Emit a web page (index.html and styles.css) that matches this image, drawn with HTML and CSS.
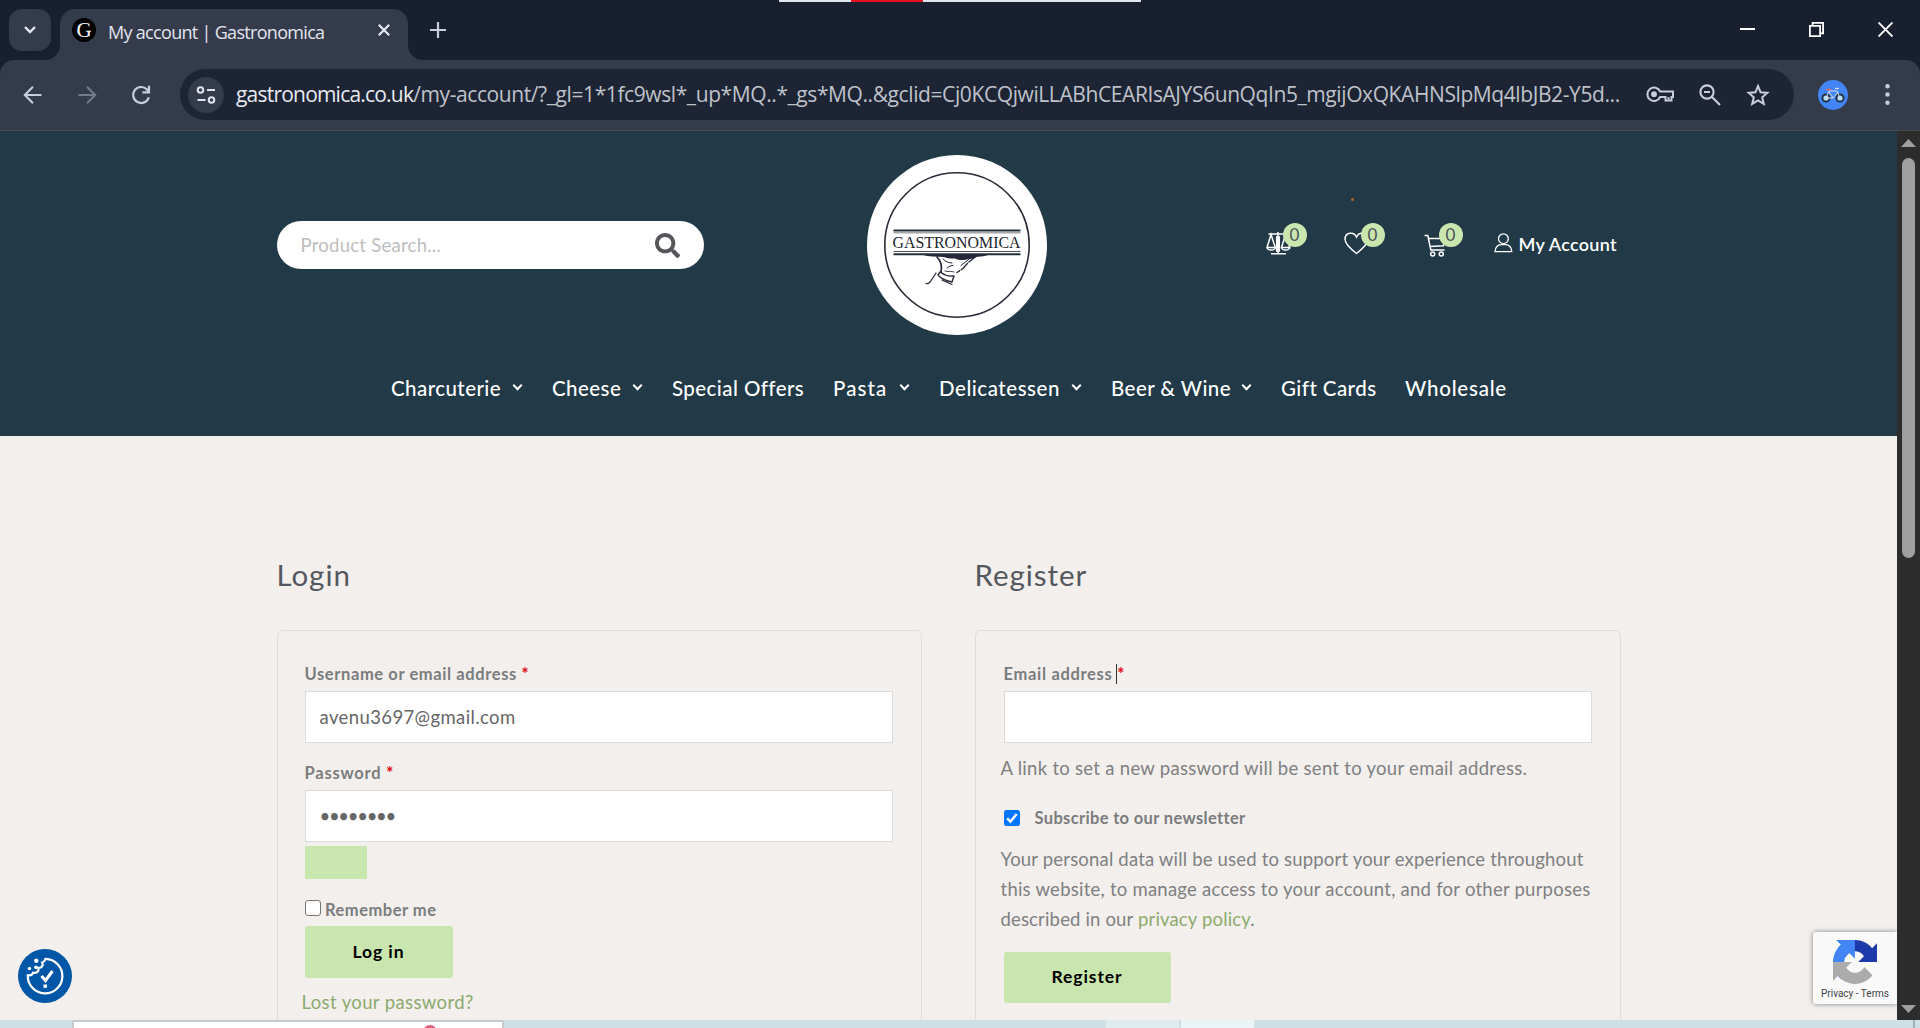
FILE: index.html
```html
<!DOCTYPE html>
<html lang="en">
<head>
<meta charset="utf-8">
<title>My account | Gastronomica</title>
<link rel="stylesheet" href="styles.css">
</head>
<body>
<div class="tabstrip">
  <button class="tab-search"><svg width="14" height="10" viewBox="0 0 14 10" fill="none" stroke="#e6e8f2" stroke-width="2.4"><path d="M2 2l5 5 5-5"/></svg></button>
  <div class="tab">
    <span class="favicon">G</span>
    <span class="tab-title">My account | Gastronomica</span>
    <svg class="tab-close" width="12" height="12" viewBox="0 0 12 12" stroke="#e6e8f2" stroke-width="2.2"><path d="M.8.8l10.4 10.4M11.2.8L.8 11.2"/></svg>
  </div>
  <svg class="tab-new" width="16" height="16" viewBox="0 0 16 16" stroke="#c9cee0" stroke-width="2.2"><path d="M8 0v16M0 8h16"/></svg>
  <div class="share-bar"><span class="share-stop"></span></div>
  <div class="window-controls">
    <svg width="15" height="15" viewBox="0 0 15 15" stroke="#fff" stroke-width="2"><path d="M0 7h15"/></svg>
    <svg width="15" height="15" viewBox="0 0 15 15" fill="none" stroke="#fff" stroke-width="1.8"><path d="M.9 3.9h10.2v10.2H.9zM3.6 3.6V.9h10.5v10.5h-2.7"/></svg>
    <svg width="15" height="15" viewBox="0 0 15 15" stroke="#fff" stroke-width="1.9"><path d="M.5.5l14 14M14.5.5l-14 14"/></svg>
  </div>
</div>
<div class="toolbar">
  <div class="nav-buttons">
    <svg width="20" height="20" viewBox="0 0 20 20" fill="none" stroke="#c6cde0" stroke-width="2.1"><path d="M18.5 10H2.5M10 1.8L1.8 10l8.2 8.2"/></svg>
    <svg width="20" height="20" viewBox="0 0 20 20" fill="none" stroke="#737a8c" stroke-width="2.1"><path d="M1.5 10h16M10 1.8l8.2 8.2-8.2 8.2"/></svg>
    <svg width="20" height="20" viewBox="0 0 20 20" fill="none" stroke="#c6cde0" stroke-width="2.2"><path d="M17.8 12.4A8 8 0 1 1 16 4.5l2 2.4M18 .8v6.5h-6.6"/></svg>
  </div>
  <div class="omnibox">
    <span class="site-info"><svg width="20" height="18" viewBox="0 0 20 18" fill="none" stroke="#dfe3ee" stroke-width="2"><circle cx="4.500" cy="4" r="2.800"/><path d="M11 4h8M1.500 14h8"/><circle cx="15.500" cy="14" r="2.800"/></svg></span>
    <span class="url"><span class="url-host">gastronomica.co.uk</span><span class="url-path">/my-account/?_gl=1*1fc9wsl*_up*MQ..*_gs*MQ..&amp;gclid=Cj0KCQjwiLLABhCEARIsAJYS6unQqIn5_mgijOxQKAHNSlpMq4lbJB2-Y5d...</span></span>
    <div class="omni-icons">
      <svg width="28" height="17" viewBox="0 0 28 17" fill="none" stroke="#c9cddc" stroke-width="2"><path d="M14.200 5.500A6.700 6.700 0 1 0 14.200 11h5.300v3.600h6V11H27V5.500z"/><circle cx="8" cy="8.200" r="2.900" fill="#c9cddc" stroke="none"/><path d="M22.500 11v2.500"/></svg>
      <svg width="22" height="22" viewBox="0 0 22 22" fill="none" stroke="#c9cddc" stroke-width="2.100"><circle cx="8" cy="8" r="6.600"/><path d="M13 13l8 8M5 8h6"/></svg>
      <svg width="24" height="24" viewBox="0 0 24 24" fill="none" stroke="#c9cddc" stroke-width="2"><path d="M12 3l2.600 6.300 6.700.6-5.100 4.400 1.600 6.600L12 17.400l-5.800 3.500 1.600-6.600-5.100-4.400 6.700-.6z"/></svg>
    </div>
  </div>
  <svg class="avatar" width="30" height="30" viewBox="0 0 30 30" fill="none"><circle cx="15" cy="15" r="15" fill="#4285f4"/><g fill="#b5e0fa" stroke="#253145" stroke-width="2"><circle cx="8" cy="18" r="3.600"/><circle cx="22" cy="18" r="3.600"/></g><path d="M8 18l3-7h8l3 7M11 12l4 6 5-6M15 18H8" stroke="#d5dde6" stroke-width="1"/><path d="M8.500 9.500h4.500" stroke="#e0705a" stroke-width="1.600"/><path d="M17 8.500h4" stroke="#d5dde6" stroke-width="1.300"/></svg>
  <svg class="kebab" width="5" height="21" viewBox="0 0 5 21" fill="#c9cddc"><circle cx="2.500" cy="2.200" r="2.200"/><circle cx="2.500" cy="10.500" r="2.200"/><circle cx="2.500" cy="18.800" r="2.200"/></svg>
</div>

<div class="viewport">
  <div class="page">
    <header class="header">
      <div class="header-main">
        <label class="search">
          <input class="search-input" placeholder="Product Search...">
          <svg width="25" height="25" viewBox="0 0 512 512" fill="#54565a"><path d="M505 442.700L405.300 343c-4.500-4.500-10.600-7-17-7H372c27.600-35.300 44-79.700 44-128C416 93.100 322.900 0 208 0S0 93.100 0 208s93.100 208 208 208c48.300 0 92.700-16.400 128-44v16.300c0 6.400 2.500 12.500 7 17l99.700 99.700c9.400 9.400 24.600 9.400 33.900 0l28.300-28.300c9.400-9.400 9.400-24.600.1-34zM208 336c-70.700 0-128-57.200-128-128 0-70.700 57.200-128 128-128 70.700 0 128 57.200 128 128 0 70.700-57.200 128-128 128z"/></svg>
        </label>
        <svg class="logo" width="180" height="180" viewBox="0 0 180 180">
          <circle cx="90" cy="90" r="90" fill="#fff"/>
          <circle cx="90" cy="90" r="72.200" fill="none" stroke="#2b2a38" stroke-width="1.600"/>
          <path d="M26.500 75.500h127" stroke="#22303a" stroke-width="2"/>
          <path d="M26.500 77.800h127" stroke="#a5a7ab" stroke-width="1.600"/>
          <path d="M26.500 96.500h127" stroke="#444b55" stroke-width="1"/>
          <path d="M26.500 99.300h127" stroke="#22303a" stroke-width="2"/>
          <text class="logo-text" x="25.500" y="93" textLength="128" lengthAdjust="spacingAndGlyphs">GASTRONOMICA</text>
          <path d="M56 100h65c-5 1.500-9 1.800-13 1.900-2.500 2-4.500 2-7 2-3 1.600-9 1.600-13-.4-5 .2-8-.6-11-1.600-8 0-15-.2-21-1.900z" fill="#25263a"/>
          <g fill="none" stroke="#25263a" stroke-linecap="round">
            <path d="M70 102c5 5 5 10 4 15" stroke-width="1.700"/>
            <path d="M109 101.500c-7 5-10 8-13 12l-6 4" stroke-width="1.400" stroke-dasharray="9 2"/>
            <path d="M76 104c3 3 6 4 9 4M80 113l3-2 3-.5M104 102.500l-10 8M78 116c5 1 7 0 9 1" stroke-width="1"/>
            <path d="M74 117.500c4 3 8 4 12 3.500M72 121c3 3 8 5 13 6l2-6M73 117l-2 3" stroke-width="1.400"/>
            <path d="M69 118l-6 9c-2 2-3 2-4 1.500M75 125l10 4.500" stroke-width="1.200"/>
          </g>
        </svg>
        <div class="tools">
          <a class="tool">
            <svg width="25" height="23" viewBox="0 0 25 23" fill="none" stroke="#fff" stroke-width="1.500"><path d="M2.500 2h19M12 0v21M5 21.700h15M5 2.500L1 15.500h8.300zM19.500 2.500l-4 13h8.300zM1 15.500c.5 3.300 7.800 3.300 8.300 0M15.500 15.500c.5 3.300 7.800 3.300 8.300 0M10.700 5v14h2.600V5z"/></svg>
            <span class="badge">0</span>
          </a>
          <a class="tool">
            <svg width="25" height="23" viewBox="0 0 25 23" fill="none" stroke="#fff" stroke-width="1.500"><path d="M12.500 21.500C8 18 1 12.500 1 7.300 1 0 10-.8 12.500 5 15-.8 24 0 24 7.300c0 5.200-7 10.700-11.500 14.200z"/></svg>
            <span class="badge">0</span>
          </a>
          <a class="tool">
            <svg width="25" height="23" viewBox="0 0 25 23" fill="none" stroke="#fff" stroke-width="1.500"><path d="M.5 1.500h3.300l3 14.500h13.700M4.300 4.500h16.200l-1 7.300L6 12.500"/><circle cx="8.700" cy="20" r="2"/><circle cx="17.300" cy="20" r="2"/></svg>
            <span class="badge">0</span>
          </a>
          <a class="account">
            <svg width="19" height="20" viewBox="0 0 19 20" fill="none" stroke="#fff" stroke-width="1.300"><circle cx="9.400" cy="5.700" r="4.900"/><path d="M1 18.700c0-4.500 3-7 6-7h4.800c3 0 6 2.500 6 7z"/></svg>
            <span>My Account</span>
          </a>
        </div>
      </div>
      <nav class="menu">
        <a class="menu-item has-sub">Charcuterie</a>
        <a class="menu-item has-sub">Cheese</a>
        <a class="menu-item">Special Offers</a>
        <a class="menu-item has-sub">Pasta</a>
        <a class="menu-item has-sub">Delicatessen</a>
        <a class="menu-item has-sub">Beer &amp; Wine</a>
        <a class="menu-item">Gift Cards</a>
        <a class="menu-item">Wholesale</a>
      </nav>
      <span class="speck"></span>
    </header>

    <main class="columns">
      <section>
        <h2 class="title">Login</h2>
        <form class="card">
          <label class="label">Username or email address <b class="req">*</b></label>
          <input class="field" type="text" value="avenu3697@gmail.com">
          <label class="label label-next">Password <b class="req">*</b></label>
          <input class="field password" type="password" value="password">
          <span class="reveal"></span>
          <label class="label remember"><span class="box"></span>Remember me</label>
          <button class="btn btn-login" type="button">Log in</button>
          <p class="text lost"><a class="link">Lost your password?</a></p>
        </form>
      </section>
      <section>
        <h2 class="title">Register</h2>
        <form class="card">
          <label class="label">Email address <b class="req caret">*</b></label>
          <input class="field" type="text">
          <p class="text hint">A link to set a new password will be sent to your email address.</p>
          <label class="label subscribe"><svg width="16" height="16" viewBox="0 0 16 16" fill="none"><rect width="16" height="16" rx="2.500" fill="#0075ff"/><path d="M3.200 8.400l3.200 3.200 6.300-7.600" stroke="#fff" stroke-width="2.400"/></svg>Subscribe to our newsletter</label>
          <p class="text policy">Your personal data will be used to support your experience throughout<br><span class="line-wide">this website, to manage access to your account, and for other purposes</span><br><span class="line-tight">described in our <a class="link">privacy policy</a>.</span></p>
          <button class="btn btn-register" type="button">Register</button>
        </form>
      </section>
    </main>

    <svg class="cookie" width="54" height="54" viewBox="0 0 54 54" fill="none"><circle cx="27" cy="27" r="27" fill="#0056a7"/><path d="M27.500 9.800A17.300 17.300 0 1 1 9.800 26.300c3 .5 4.700-.5 5.200-2.500 4 .5 6-1.500 5.500-4.800 3.500-.2 5-2.500 3.700-5.500 1.600-.5 2.500-1.600 3.300-3.700z" stroke="#fff" stroke-width="2.200"/><g fill="#fff"><circle cx="18.300" cy="11.700" r="2.200"/><circle cx="11.500" cy="19.500" r="1.700"/><circle cx="18" cy="18.300" r="1.900"/><path d="M25.500 35.500h3.500v3.300h-3.500z"/></g><path d="M23.500 27l4 4.500 7-9.500" stroke="#fff" stroke-width="3"/></svg>
    <div class="recaptcha">
      <svg width="44" height="44" viewBox="0 0 64 64"><path fill="#1c3aa9" d="M64 31.955l-.033-1.370V4.687l-7.160 7.160C50.948 4.674 42.033.093 32.050.093c-10.400 0-19.622 4.960-25.458 12.640l11.736 11.860a15.550 15.550 0 0 1 4.754-5.334c2.050-1.600 4.952-2.906 8.968-2.906.485 0 .860.057 1.135.163 4.976.393 9.288 3.140 11.828 7.124l-8.307 8.307L64 31.953"/><path fill="#4285f4" d="M31.862.094l-1.370.033H4.594l7.160 7.160C4.580 13.147 0 22.060 0 32.046c0 10.400 4.960 19.622 12.640 25.458L24.500 45.768a15.550 15.550 0 0 1-5.334-4.754c-1.600-2.050-2.906-4.952-2.906-8.968 0-.485.057-.860.163-1.135.393-4.976 3.140-9.288 7.124-11.828l8.307 8.307L31.860.095"/><path fill="#ababab" d="M.001 32.045l.033 1.370v25.898l7.160-7.160c5.860 7.173 14.774 11.754 24.760 11.754 10.400 0 19.622-4.960 25.458-12.640l-11.736-11.860a15.550 15.550 0 0 1-4.754 5.334c-2.050 1.600-4.952 2.906-8.968 2.906-.485 0-.860-.057-1.135-.163-4.976-.393-9.288-3.140-11.828-7.124l8.307-8.307c-10.522.040-22.400.066-27.295-.005"/></svg>
      <span>Privacy - Terms</span>
    </div>
  </div>
  <div class="scrollbar">
    <svg width="15" height="8" viewBox="0 0 15 8" fill="#9f9f9f"><path d="M0 8L7.500 0 15 8z"/></svg>
    <span class="thumb"></span>
    <svg width="15" height="8" viewBox="0 0 15 8" fill="#9f9f9f"><path d="M0 0l7.500 8L15 0z"/></svg>
  </div>
</div>
<div class="desktop-edge">
  <div class="taskbar-search"><span class="search-art"></span></div>
  <span class="task task-a"></span>
  <span class="task task-b"></span>
  <span class="show-desktop"></span>
</div>
</body>
</html>
```
FILE: styles.css
```css
*{box-sizing:border-box}
body{margin:0;width:1920px;height:1028px;overflow:hidden;display:flex;flex-direction:column;background:#18202f;font-family:Lato,"Open Sans",sans-serif}
svg{display:block;flex:none}
button{border:0;padding:0;font:inherit}
h2,p{margin:0}

/* Browser chrome */
.tabstrip{position:relative;flex:none;height:60px;display:flex;align-items:flex-start;padding-top:9px;font-family:"Open Sans",sans-serif}
.tab-search{width:42px;height:42px;margin-left:9px;border-radius:13px;background:#343b4b;display:flex;align-items:center;justify-content:center}
.tab{position:relative;width:348px;height:51px;margin-left:9px;padding:0 18px 9px 12px;border-radius:15px 15px 0 0;background:#343b4b;display:flex;align-items:center}
.tab::before,.tab::after{content:"";position:absolute;bottom:0;width:15px;height:15px}
.tab::before{left:-15px;background:radial-gradient(circle at 0 0,transparent 14.5px,#343b4b 15.5px)}
.tab::after{right:-15px;background:radial-gradient(circle at 100% 0,transparent 14.5px,#343b4b 15.5px)}
.favicon{width:24px;height:24px;border-radius:50%;background:#000;color:#fff;font:21px/24px "Liberation Serif",serif;text-align:center}
.tab-title{margin-left:12px;padding-top:3px;font-size:18px;line-height:24px;letter-spacing:-.69px;color:#e3e5ee;white-space:nowrap}
.tab-close{margin-left:auto}
.tab-new{margin:13px 0 0 22px}
.window-controls{display:flex;gap:54px;margin:13px 27px 0 auto}
.share-bar{position:absolute;left:779px;top:0;width:362px;height:2px;background:#e2e5ee}
.share-stop{display:block;width:72px;height:2px;margin-left:72px;background:#e81123}
.toolbar{flex:none;height:71px;display:flex;align-items:flex-start;padding-top:9px;background:#343b4b;border-bottom:1px solid #494c52;border-radius:14px 14px 0 0}
.nav-buttons{display:grid;grid-template-columns:repeat(3,54px);justify-items:center;align-items:center;height:51px;margin-left:6px}
.omnibox{width:1614px;height:51px;margin-left:12px;padding-left:8px;border-radius:26px;background:#1d2535;display:flex;align-items:center}
.site-info{flex:none;width:36px;height:36px;border-radius:50%;background:#343b4b;display:flex;align-items:center;justify-content:center}
.url{margin-left:12px;padding-bottom:1px;font:21px/30px "Open Sans",sans-serif;white-space:nowrap}
.url-host{color:#e8eaf2;letter-spacing:-.79px}
.url-path{color:#bfc2c9;letter-spacing:-.405px}
.omni-icons{display:flex;align-items:center;gap:25px;margin:0 24px 0 auto}
.avatar{margin:11px 0 0 24px}
.kebab{margin:15px 0 0 37px}

/* Page */
.viewport{flex:none;height:889px;display:flex}
.page{position:relative;width:1897px;overflow:hidden;background:#f2efec}
.header{position:relative;height:305px;padding-top:24px;background:#223947;color:#fff}
.header-main{width:1344px;height:180px;margin:0 auto;display:flex;align-items:center}
.search{width:427px;height:48px;padding:0 24px;border-radius:24px;background:#fff;display:flex;align-items:center;justify-content:space-between}
.search-input{width:340px;height:40px;padding:0;border:0;outline:0;background:none;font:18.5px/40px Lato,sans-serif;letter-spacing:.26px}
.search-input::placeholder{color:#bdbdbd;opacity:1}
.logo{margin-left:163px}
.logo-text{font:17px "Liberation Serif",serif;fill:#22262f}
.tools{width:355px;height:26px;margin:0 0 3px auto;display:flex;align-items:center}
.tool{position:relative;width:25px;margin-right:53px}
.badge{position:absolute;left:17px;top:-9px;width:24px;height:24px;border-radius:50%;background:#c8e6ad;color:#4b5358;font-size:17px;line-height:24px;text-align:center}
.tools .tool:nth-child(3) svg{position:relative;left:2px;top:2px}
.account{display:flex;align-items:center;gap:6px;margin-left:-6px;font-size:18px;font-weight:600;letter-spacing:.28px;white-space:nowrap}
.account svg{position:relative;top:-1px}
.menu{height:40px;margin:33px 0 0 391px;display:flex;gap:29px;font-size:20.5px;font-weight:500;line-height:41px}
.menu-item{white-space:nowrap;letter-spacing:.43px}
.menu-item:nth-child(1){width:132px}
.menu-item:nth-child(2){width:91px}
.menu-item:nth-child(3){width:132px}
.menu-item:nth-child(4){width:77px;letter-spacing:1.1px}
.menu-item:nth-child(5){width:143px;letter-spacing:.54px}
.menu-item:nth-child(6){width:141px}
.menu-item:nth-child(7){width:95px}
.menu-item:nth-child(8){letter-spacing:.78px}
.has-sub{display:flex;align-items:center;justify-content:space-between}
.has-sub::after{content:"";flex:none;box-sizing:content-box;width:5px;height:5px;margin:-5px 2px 0 0;border:solid #fff;border-width:0 2.500px 2.500px 0;transform:rotate(45deg)}
.speck{position:absolute;left:1351px;top:67px;width:3px;height:3px;border-radius:50%;background:#b5622f}

.columns{width:1344px;margin:0 auto;padding-top:118px;display:grid;grid-template-columns:645px 646px;justify-content:space-between}
.title{height:40px;margin:0 0 36px;font-size:29.500px;font-weight:400;line-height:41px;letter-spacing:.95px;color:#54585e}
.card{height:480px;padding:28px 27px;border:1px solid #dfdcd9;border-radius:6px;display:flex;flex-direction:column;align-items:flex-start}
.columns section:nth-child(2) .card{padding-left:28px}
.label{height:30px;font-size:16.500px;font-weight:700;line-height:31px;letter-spacing:.6px;color:#7b7c7d;white-space:nowrap}
.label-next{margin-top:15px;letter-spacing:.78px}
.req{color:#e4121b}
.caret{position:relative}
.caret::before{content:"";position:absolute;left:-1px;top:0;width:1px;height:20px;background:#333}
.field{width:588px;height:52px;margin-top:2px;padding:0 14px;border:1px solid #dcdcdc;border-radius:0;outline:0;background:#fff;color:#666;font:18.500px/30px Lato,sans-serif;letter-spacing:.39px}
.password{letter-spacing:-1.300px}
.columns section:nth-child(2) .label:first-child{letter-spacing:.68px}
.reveal{width:62px;height:33px;margin-top:4px;background:#c8e6ad}
.remember{margin-top:16px;display:flex;letter-spacing:.5px}
.box{width:16px;height:16px;margin:5px 4.500px 0 0;border:1px solid #767676;border-radius:3px;background:#fff}
.btn{padding-bottom:2px;border-radius:3px;background:#c8e6ad;color:#000;font-size:17.500px;font-weight:700;letter-spacing:.91px}
.btn-login{width:148px;height:52px;margin-top:1px}
.btn-register{width:167px;height:51px;margin-top:18px}
.text{margin-left:-3px;font-size:18.500px;line-height:30px;letter-spacing:.285px;color:#7f8081;white-space:nowrap}
.link{color:#8daa6e}
.lost{margin-top:9px;letter-spacing:.38px}
.hint{margin-top:10px}
.subscribe{margin-top:20px;display:flex;align-items:center;gap:15px;line-height:30px;letter-spacing:.34px}
.policy{margin-top:11px;letter-spacing:.18px}
.line-wide{letter-spacing:.243px}
.line-tight{letter-spacing:.16px}

.cookie{position:absolute;left:18px;top:818px}
.recaptcha{position:absolute;left:1813px;top:801px;width:84px;height:72px;padding-top:8px;border-radius:3px 0 0 3px;background:#f9f9f9;box-shadow:0 0 5px #808080;display:flex;flex-direction:column;align-items:center;gap:3px;font:10px/14px Roboto,sans-serif;color:#444;white-space:nowrap}

.scrollbar{width:23px;padding:8px 0 7px 4px;background:#2c2c2c;display:flex;flex-direction:column}
.thumb{width:13px;height:400px;margin:11px 0 auto 1px;border-radius:7px;background:#9f9f9f}

/* Taskbar sliver */
.desktop-edge{flex:none;height:8px;display:flex;background:#cce0e6}
.taskbar-search{width:432px;margin-left:72px;border:2px solid #c6cbcc;border-bottom:0;background:#fff;overflow:hidden}
.search-art{display:block;width:14px;height:14px;margin:3px 0 0 349px;border-radius:50%;background:#e0607a}
.task{width:73px}
.task-a{margin-left:602px;background:#deecef}
.task-b{margin-left:2px;background:#eaf3f5}
.show-desktop{width:2px;margin-left:auto;margin-right:5px;background:#9fb2b8}
```
